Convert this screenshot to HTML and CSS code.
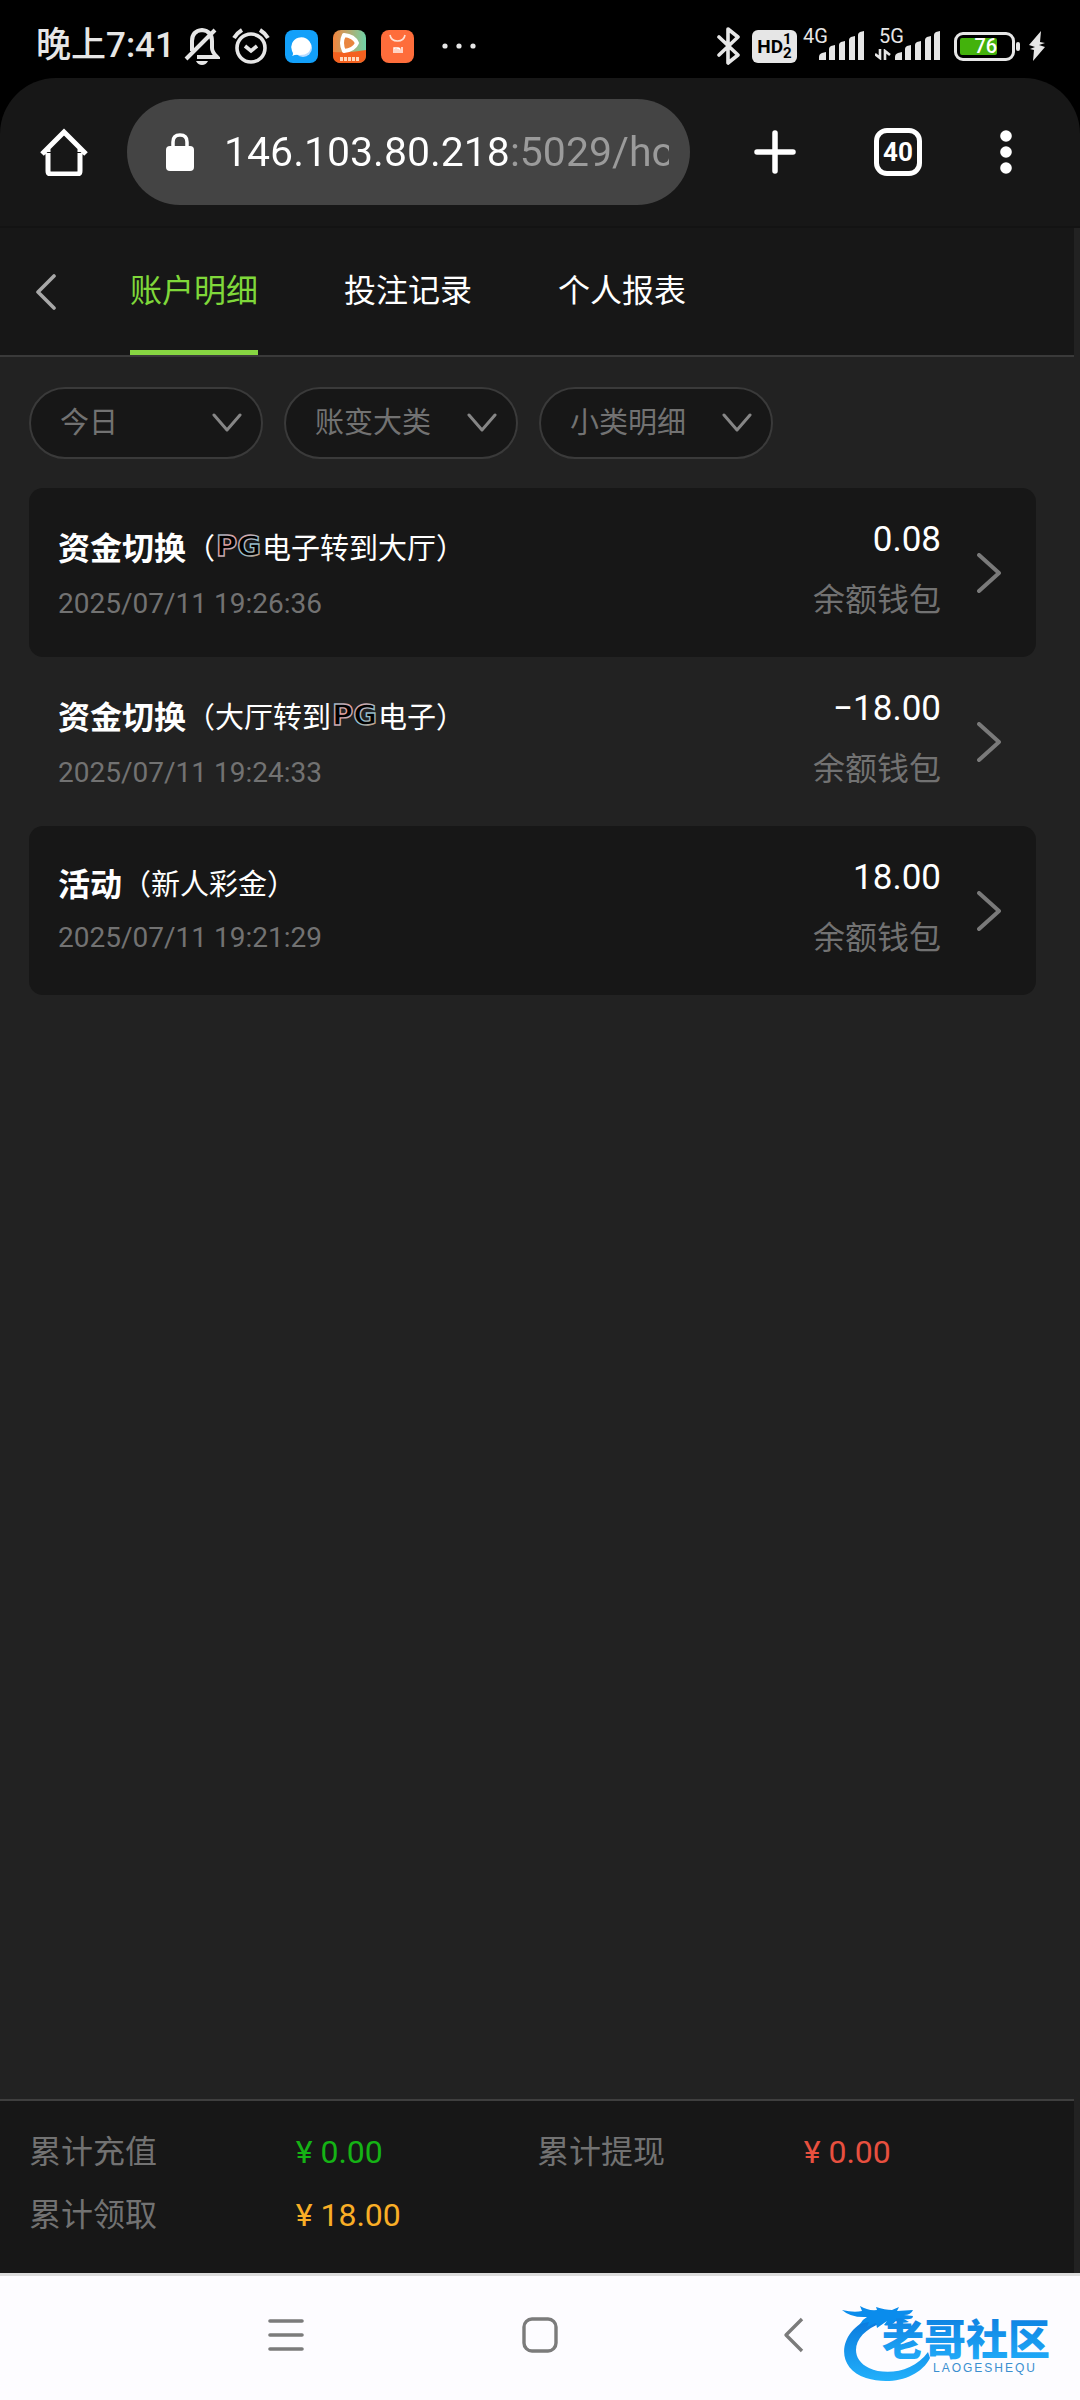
FILE: index.html
```html
<!DOCTYPE html>
<html lang="zh-CN">
<head>
  <meta charset="UTF-8">
  <meta name="viewport" content="width=device-width, initial-scale=1.0">
  <title>账户明细</title>
  <link rel="stylesheet" href="styles.css">
</head>
<body>
  <!-- Shared gradients and symbols -->
  <svg class="defs" width="0" height="0" aria-hidden="true">
    <defs>
      <linearGradient id="pg-edge" x1="0" y1="0" x2="1" y2="1">
        <stop offset="0" stop-color="#7cc4d8"/>
        <stop offset="0.35" stop-color="#e8a0a0"/>
        <stop offset="0.65" stop-color="#8fc3d4"/>
        <stop offset="1" stop-color="#e08a55"/>
      </linearGradient>
      <linearGradient id="logo-blue" x1="0" y1="0" x2="0" y2="1">
        <stop offset="0" stop-color="#0a78dc"/>
        <stop offset="1" stop-color="#22b0fb"/>
      </linearGradient>
      <linearGradient id="video-bg" x1="0" y1="0" x2="1" y2="0">
        <stop offset="0" stop-color="#f5843c"/>
        <stop offset="1" stop-color="#6fd3a8"/>
      </linearGradient>
    </defs>
    <symbol id="bars" viewBox="0 0 46 30">
      <path d="M0 29v-3q0-3 3-4l4-1v8zM10 29V18q0-2 2-3l4-1v15zM20 29V14q0-2 2-3l4-1v19zM30 29V9q0-2 2-3l4-1v24zM39 29V4q0-2 2-3l4-1v29z" fill="#e6e6e6"/>
    </symbol>
    <symbol id="arrow-down" viewBox="0 0 30 20">
      <path d="M2 2l13 15L28 2" fill="none" stroke="#868686" stroke-width="3" stroke-linecap="round" stroke-linejoin="round"/>
    </symbol>
    <symbol id="arrow-right" viewBox="0 0 24 40">
      <path d="M2 2l20 18L2 38" fill="none" stroke="#7a7a7a" stroke-width="4" stroke-linecap="round" stroke-linejoin="round"/>
    </symbol>
  </svg>

  <!-- Status Bar -->
  <div class="status-bar">
    <div class="status-left">
      <span class="clock">晚上7:41</span>
      <svg class="bell" width="36" height="38" viewBox="0 0 36 38">
        <path d="M8 24V14Q8 4 18 3q10 1 10 11v7q0 4 5 9H13M2 32L31 3" fill="none" stroke="#e6e6e6" stroke-width="4"/>
        <path d="M12 34h12q-2 4-6 4t-6-4z" fill="#e6e6e6"/>
      </svg>
      <svg class="alarm" width="38" height="36" viewBox="0 0 38 36">
        <circle cx="19" cy="20" r="14" fill="none" stroke="#e6e6e6" stroke-width="3.6"/>
        <path d="M2 10q3-5 8-8M36 10q-3-5-8-8" fill="none" stroke="#e6e6e6" stroke-width="4"/>
        <path d="M13 18l6 5 6-5" fill="none" stroke="#e6e6e6" stroke-width="3.6"/>
      </svg>
      <svg class="app" width="33" height="33" viewBox="0 0 33 33">
        <rect width="33" height="33" rx="8" fill="#12a0fa"/>
        <circle cx="18" cy="18" r="9" fill="#b9dcff"/>
        <path d="M7 26q2-2 0-5a10 10 0 1 1 19-6q0 10-11 10-4-1-8 1z" fill="#fff"/>
      </svg>
      <svg class="app" width="33" height="33" viewBox="0 0 33 33">
        <rect width="33" height="33" rx="8" fill="url(#video-bg)"/>
        <path d="M0 22q16 1 33-2v5q0 8-8 8H8q-8 0-8-8z" fill="#f4611f"/>
        <path d="M11 5q10 1 13 8-3 7-13 8-4-8 0-16z" fill="#e9853f" stroke="#fff" stroke-width="4" stroke-linejoin="round"/>
        <path d="M7 29h19" stroke="#ffd9bd" stroke-width="4" stroke-dasharray="3 1"/>
      </svg>
      <svg class="app" width="33" height="33" viewBox="0 0 33 33">
        <rect width="33" height="33" rx="8" fill="#fe6d3b"/>
        <path d="M9 5q1 6 7.500 6T24 5" fill="none" stroke="#ffe1d3" stroke-width="1.600"/>
        <path d="M13 23v-5h4v5m-2 0v-4m2-1q2 0 2 2v3M21 17v6" fill="none" stroke="#fff" stroke-width="1.400"/>
      </svg>
      <svg class="more" width="34" height="6" viewBox="0 0 34 6">
        <circle cx="3" cy="3" r="2.600" fill="#e6e6e6"/><circle cx="17" cy="3" r="2.600" fill="#e6e6e6"/><circle cx="31" cy="3" r="2.600" fill="#e6e6e6"/>
      </svg>
    </div>
    <div class="status-right">
      <svg width="24" height="38" viewBox="0 0 24 38">
        <path d="M2 10l19 18-10 8V2l10 8L2 28" fill="none" stroke="#e6e6e6" stroke-width="3.600" stroke-linejoin="round" stroke-linecap="round"/>
      </svg>
      <div class="hd">HD<span class="hd-nums"><i>1</i><i>2</i></span></div>
      <div class="signal">
        <span class="net">4G</span>
        <svg width="46" height="30"><use href="#bars"/></svg>
      </div>
      <div class="signal second">
        <span class="net">5G</span>
        <svg class="updown" width="16" height="11" viewBox="0 0 16 11">
          <path d="M5 0v9L0 5M10 11V2l5 4" fill="none" stroke="#e6e6e6" stroke-width="2.600"/>
        </svg>
        <svg width="46" height="30"><use href="#bars"/></svg>
      </div>
      <div class="battery"><span class="level">76</span></div>
      <svg class="bolt" width="18" height="30" viewBox="0 0 18 30">
        <path d="M13 0L1 14l6 2-5 2 4 1-1 11 12-14-6-2 6-2-5-1z" fill="#e6e6e6"/>
      </svg>
    </div>
  </div>

  <!-- Browser Toolbar -->
  <div class="toolbar">
    <button class="icon-btn" aria-label="主页">
      <svg width="48" height="48" viewBox="0 0 48 48">
        <path d="M8 25v18q0 3 3 3h26q3 0 3-3V25M2 26L24 4l22 22M8 24v-3M40 24v-3" fill="none" stroke="#fff" stroke-width="5"/>
      </svg>
    </button>
    <label class="address">
      <svg width="28" height="38" viewBox="0 0 28 38">
        <path d="M7 15V9q0-7 7-7t7 7v6" fill="none" stroke="#fff" stroke-width="3.500"/>
        <rect y="13" width="28" height="25" rx="4" fill="#fff"/>
      </svg>
      <input class="url" type="text" value="146.103.80.218:5029/home" aria-label="网址">
    </label>
    <div class="toolbar-actions">
      <button class="icon-btn" aria-label="新标签页">
        <svg width="42" height="44" viewBox="0 0 42 44">
          <path d="M21 3v38M3 22h36" stroke="#fff" stroke-width="5.500" stroke-linecap="round"/>
        </svg>
      </button>
      <button class="tab-count">40</button>
      <button class="icon-btn" aria-label="菜单">
        <svg width="12" height="44" viewBox="0 0 12 44">
          <circle cx="6" cy="6" r="5.800" fill="#fff"/><circle cx="6" cy="22" r="5.800" fill="#fff"/><circle cx="6" cy="38" r="5.800" fill="#fff"/>
        </svg>
      </button>
    </div>
  </div>

  <!-- Page Content -->
  <div class="page">
    <nav class="tabs">
      <button class="icon-btn back" aria-label="返回">
        <svg width="22" height="36" viewBox="0 0 22 36">
          <path d="M19 2L3 18l16 16" fill="none" stroke="#a8a8a8" stroke-width="3.600" stroke-linecap="round" stroke-linejoin="round"/>
        </svg>
      </button>
      <a class="tab active" href="#">账户明细</a>
      <a class="tab" href="#">投注记录</a>
      <a class="tab" href="#">个人报表</a>
    </nav>

    <main class="content">
      <div class="filters">
        <div class="filter">
          <select aria-label="日期"><option>今日</option></select>
          <svg width="30" height="20"><use href="#arrow-down"/></svg>
        </div>
        <div class="filter">
          <select aria-label="账变大类"><option>账变大类</option></select>
          <svg width="30" height="20"><use href="#arrow-down"/></svg>
        </div>
        <div class="filter">
          <select aria-label="小类明细"><option>小类明细</option></select>
          <svg width="30" height="20"><use href="#arrow-down"/></svg>
        </div>
      </div>

      <ul class="records">
        <li>
          <a class="record" href="#">
            <div class="info">
              <div class="title"><b>资金切换</b><span>（</span><svg width="47" height="56"><text class="pg-text" x="1" y="38">PG</text></svg><span>电子转到大厅）</span></div>
              <div class="date">2025/07/11 19:26:36</div>
            </div>
            <div class="sum">
              <div class="amount">0.08</div>
              <div class="wallet">余额钱包</div>
            </div>
            <svg class="go" width="24" height="40"><use href="#arrow-right"/></svg>
          </a>
        </li>
        <li>
          <a class="record" href="#">
            <div class="info">
              <div class="title"><b>资金切换</b><span>（大厅转到</span><svg width="47" height="56"><text class="pg-text" x="1" y="38">PG</text></svg><span>电子）</span></div>
              <div class="date">2025/07/11 19:24:33</div>
            </div>
            <div class="sum">
              <div class="amount">−18.00</div>
              <div class="wallet">余额钱包</div>
            </div>
            <svg class="go" width="24" height="40"><use href="#arrow-right"/></svg>
          </a>
        </li>
        <li>
          <a class="record" href="#">
            <div class="info">
              <div class="title"><b>活动</b><span>（新人彩金）</span></div>
              <div class="date">2025/07/11 19:21:29</div>
            </div>
            <div class="sum">
              <div class="amount">18.00</div>
              <div class="wallet">余额钱包</div>
            </div>
            <svg class="go" width="24" height="40"><use href="#arrow-right"/></svg>
          </a>
        </li>
      </ul>
    </main>

    <footer class="totals">
      <span>累计充值</span><span class="green">¥ 0.00</span>
      <span>累计提现</span><span class="red">¥ 0.00</span>
      <span>累计领取</span><span class="orange">¥ 18.00</span>
    </footer>
  </div>

  <!-- System Navigation -->
  <div class="system-nav">
    <div class="keys">
      <button class="icon-btn" aria-label="最近任务">
        <svg width="36" height="36" viewBox="0 0 36 36"><path d="M2 4h32M2 18h32M2 32h32" stroke="#7b7b7b" stroke-width="3.600" stroke-linecap="round"/></svg>
      </button>
      <button class="icon-btn" aria-label="桌面">
        <svg width="36" height="36" viewBox="0 0 36 36"><rect x="2" y="2" width="32" height="32" rx="8" fill="none" stroke="#7b7b7b" stroke-width="3.400"/></svg>
      </button>
      <button class="icon-btn" aria-label="返回上一级">
        <svg width="36" height="36" viewBox="0 0 36 36"><path d="M26 2L10 18l16 16" fill="none" stroke="#7b7b7b" stroke-width="3.400" stroke-linejoin="round"/></svg>
      </button>
    </div>
    <svg class="watermark" width="226" height="80" viewBox="0 0 226 80">
      <path d="M30 12C-4 24-8 62 24 72c25 8 54 0 64-20l-2-6C72 66 44 70 27 62 5 51 12 26 40 17z" fill="url(#logo-blue)"/>
      <path d="M0 4q12 3 20 1l-2-5q8 5 17 4l-1-3q9 3 16 3l7-3-2 4 16-1q-2 5-9 5l9 1q0 4-9 3l5 3q-7 2-13-1-6 6-12 4l3-4-10 7-1-5-9 4 2-5-9 2q3-5 7-7-16 1-25-7z" fill="#0a8cec"/>
      <text class="logo-name" x="40" y="49">老哥社区</text>
      <text class="logo-sub" x="91" y="66">LAOGESHEQU</text>
    </svg>
  </div>
</body>
</html>
```

FILE: styles.css
```css
/* General Reset */
* {
  margin: 0;
  padding: 0;
  box-sizing: border-box;
}

body {
  min-height: 100vh;
  display: flex;
  flex-direction: column;
  background-color: #000;
  color: #fff;
  font-family: Roboto, "Noto Sans CJK SC", sans-serif;
  font-size: 32px;
}

svg {
  display: block;
  flex: none;
}

.defs {
  position: absolute;
}

a {
  color: inherit;
  text-decoration: none;
}

button,
input,
select {
  background: none;
  border: none;
  color: inherit;
  font: inherit;
}

.icon-btn {
  display: flex;
  justify-content: center;
  align-items: center;
  cursor: pointer;
}

/* Status Bar */
.status-bar {
  height: 78px;
  display: flex;
  justify-content: space-between;
  align-items: center;
  padding: 14px 34px 0 36px;
  color: #e6e6e6;
}

.status-left,
.status-right {
  display: flex;
  align-items: center;
}

.clock {
  width: 148px;
  font-size: 35px;
  line-height: 40px;
  font-weight: 500;
  white-space: nowrap;
}

.alarm {
  margin-left: 12px;
}

.app {
  margin-left: 15px;
}

.more {
  margin-left: 28px;
}

.hd {
  display: flex;
  align-items: center;
  justify-content: center;
  width: 45px;
  height: 33px;
  margin-left: 11px;
  border-radius: 6px;
  background-color: #e6e6e6;
  color: #000;
  font: bold 19px/33px Roboto, sans-serif;
}

.hd-nums {
  display: flex;
  flex-direction: column;
  font-size: 15px;
  line-height: 14px;
}

.hd-nums i {
  font-style: normal;
}

.signal {
  display: flex;
  position: relative;
  padding-left: 16px;
  margin-left: 6px;
}

.second {
  padding-left: 20px;
  margin-left: 10px;
}

.net {
  position: absolute;
  left: 0;
  top: -5px;
  font-size: 20px;
  line-height: 20px;
}

.second .net {
  left: 4px;
}

.updown {
  position: absolute;
  left: 0;
  bottom: 1px;
}

.battery {
  position: relative;
  width: 61px;
  height: 29px;
  margin-left: 13px;
  padding: 3px;
  border: 3px solid #e6e6e6;
  border-radius: 9px;
}

.battery::after {
  content: "";
  position: absolute;
  right: -8px;
  top: 7px;
  width: 4px;
  height: 9px;
  border-radius: 2px;
  background-color: #e6e6e6;
}

.level {
  display: block;
  width: 76%;
  height: 17px;
  border-radius: 2px;
  background-color: #43b20c;
  color: #fff;
  font: 500 20px/17px Roboto, sans-serif;
  text-align: right;
}

.bolt {
  margin-left: 13px;
}

/* Browser Toolbar */
.toolbar {
  height: 150px;
  display: flex;
  align-items: center;
  padding: 0 68px 0 40px;
  border-radius: 56px 56px 0 0;
  border-bottom: 2px solid #131313;
  background-color: #171717;
}

.address {
  flex: 1;
  min-width: 0;
  height: 106px;
  display: flex;
  align-items: center;
  gap: 30px;
  margin-left: 39px;
  padding: 0 21px 0 39px;
  border-radius: 53px;
  background-color: #444;
}

/* Host is white, the rest of the address is grey */
.url {
  flex: 1;
  min-width: 0;
  font-size: 41px;
  line-height: 60px;
  background: linear-gradient(90deg, #fff 287px, #9b9b9b 287px);
  -webkit-background-clip: text;
  background-clip: text;
  -webkit-text-fill-color: transparent;
  outline: none;
}

.toolbar-actions {
  display: flex;
  align-items: center;
  gap: 78px;
  margin-left: 64px;
}

.tab-count {
  width: 48px;
  height: 48px;
  border: 5px solid #fff;
  border-radius: 13px;
  font-size: 26px;
  font-weight: bold;
  line-height: 36px;
}

/* Page */
.page {
  flex: 1;
  display: flex;
  flex-direction: column;
  background-color: #222;
  padding-right: 6px;
}

.tabs {
  display: flex;
  align-items: stretch;
  height: 129px;
  padding-left: 35px;
  border-bottom: 2px solid #3a3a3a;
  background-color: #171717;
}

.back {
  padding-right: 73px;
}

.tab {
  padding-top: 40px;
  margin-right: 86px;
  line-height: 46px;
}

.active {
  color: #7fd83a;
  border-bottom: 5px solid #87d642;
}

.content {
  flex: 1;
  padding: 30px 38px 30px 29px;
}

/* Filters */
.filters {
  display: flex;
  gap: 21px;
  margin-bottom: 29px;
}

.filter {
  position: relative;
  width: 234px;
}

.filter select {
  width: 100%;
  height: 72px;
  padding: 0 60px 0 29px;
  border: 2px solid #3a3a3a;
  border-radius: 36px;
  background-color: #171717;
  color: #727272;
  font-size: 29px;
  appearance: none;
}

.filter svg {
  position: absolute;
  right: 21px;
  top: 26px;
  pointer-events: none;
}

/* Records */
.records {
  list-style: none;
}

.record {
  display: flex;
  height: 169px;
  padding: 22px 35px 0 29px;
  border-radius: 14px;
}

.records li:nth-child(odd) .record {
  background-color: #171717;
}

.info {
  flex: 1;
  padding-top: 8px;
}

.title {
  display: flex;
  align-items: center;
  min-height: 52px;
}

.title span {
  font-size: 29px;
}

.pg-text {
  font: bold 29px "DejaVu Sans", sans-serif;
  fill: #000;
  stroke: url(#pg-edge);
  stroke-width: 1.4px;
}

.date {
  color: #727272;
  font-size: 28px;
  line-height: 60px;
}

.sum {
  text-align: right;
  line-height: 60px;
}

.amount {
  font-size: 35px;
}

.wallet {
  color: #727272;
}

.go {
  margin: 43px 0 0 36px;
}

/* Totals */
.totals {
  display: grid;
  grid-template-columns: 21fr 19fr 21fr 19fr;
  padding: 20px 29px 26px;
  border-top: 2px solid #3f3f3f;
  background-color: #171717;
  color: #727272;
  line-height: 63px;
}

.green {
  color: #15b315;
}

.red {
  color: #e8503f;
}

.orange {
  color: #f9ae26;
}

/* System Navigation */
.system-nav {
  position: relative;
  height: 127px;
  border-top: 3px solid #dcdcdc;
  background-color: #fdfcff;
}

.keys {
  display: flex;
  justify-content: center;
  gap: 218px;
  padding-top: 41px;
}

.watermark {
  position: absolute;
  right: 12px;
  top: 30px;
}

.logo-name {
  font: 900 42px "Noto Sans CJK SC", sans-serif;
  fill: url(#logo-blue);
}

.logo-sub {
  font: 12px "Liberation Sans", sans-serif;
  letter-spacing: 2px;
  fill: #3a8fd0;
}
```
